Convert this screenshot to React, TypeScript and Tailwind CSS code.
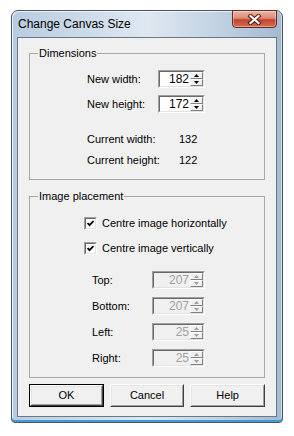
import React from "react";

const font = { fontFamily: '"Liberation Sans", Arial, sans-serif' };

function SpinBtn({ up, disabled }: { up?: boolean; disabled?: boolean }) {
  const c = disabled ? "#a0a0a0" : "#000000";
  return (
    <div className="flex-1 flex items-center justify-center bg-[#f0f0f0] border border-t-white border-l-white border-b-[#808080] border-r-[#808080]">
      <svg width="5" height="3" viewBox="0 0 5 3">
        {up ? <path d="M2.5 0 L5 3 L0 3 Z" fill={c} /> : <path d="M0 0 L5 0 L2.5 3 Z" fill={c} />}
      </svg>
    </div>
  );
}

function SpinBox({ value, w, disabled }: { value: string; w: string; disabled?: boolean }) {
  return (
    <div className={`flex h-[18px] ${w} border border-t-[#a0a0a0] border-l-[#a0a0a0] border-b-white border-r-white`}>
      <div className="flex flex-1 border border-t-[#696969] border-l-[#696969] border-b-[#e3e3e3] border-r-[#e3e3e3]">
        <div
          className={`flex-1 flex items-center justify-end pr-[1px] text-[12px] leading-none ${
            disabled ? "bg-[#f0f0f0] text-[#a0a0a0]" : "bg-white text-black"
          }`}
        >
          {value}
        </div>
        <div className="flex flex-col w-[13px]">
          <SpinBtn up disabled={disabled} />
          <SpinBtn disabled={disabled} />
        </div>
      </div>
    </div>
  );
}

function CheckBox() {
  return (
    <div className="w-[13px] h-[13px] border border-t-[#a0a0a0] border-l-[#a0a0a0] border-b-white border-r-white">
      <div className="w-full h-full bg-white border border-t-[#696969] border-l-[#696969] border-b-[#e3e3e3] border-r-[#e3e3e3] flex items-center justify-center">
        <svg width="7" height="7" viewBox="0 0 7 7">
          <path d="M0.5 3 L2.5 5.2 L6.5 1" stroke="#000" strokeWidth="1.8" fill="none" />
        </svg>
      </div>
    </div>
  );
}

function Button({ label, def }: { label: string; def?: boolean }) {
  return (
    <div className={`w-[75px] h-[23px] ${def ? "border border-[#000]" : ""}`}>
      <div className="w-full h-full border border-t-white border-l-white border-b-[#404040] border-r-[#404040]">
        <div className="w-full h-full border border-t-[#e3e3e3] border-l-[#e3e3e3] border-b-[#a0a0a0] border-r-[#a0a0a0] bg-[#f0f0f0] flex items-center justify-center text-[11px] text-black">
          {label}
        </div>
      </div>
    </div>
  );
}

export default function App() {
  return (
    <div className="w-[294px] h-[436px] bg-white pt-[10px] pl-[11px]" style={font}>
      <div className="w-[272px] h-[413px] flex flex-col rounded-t-[7px] rounded-b-[4px] border border-[#4b5663] bg-[linear-gradient(90deg,#b8cce0_0%,#cfdcea_30%,#dfe8f1_50%,#c3d3e3_75%,#a3bad1_100%)] shadow-[inset_0_-2px_0_#3f9bd8,inset_1px_1px_0_rgba(255,255,255,0.7),inset_-1px_0_0_rgba(255,255,255,0.5)]">
        <div className="h-[26px] flex items-center justify-between">
          <span className="ml-[6px] text-[12px] text-black">Change Canvas Size</span>
          <div className="self-start -mt-[1px] mr-[5px] w-[45px] h-[18px] rounded-b-[4px] border border-[#6b2a1f] bg-[linear-gradient(180deg,#ecb6a7_0%,#dd8b77_45%,#c4422d_55%,#d36f58_100%)] shadow-[inset_0_0_0_1px_rgba(255,255,255,0.35)] flex items-center justify-center">
            <svg width="15" height="11" viewBox="0 0 15 11">
              <path d="M3.5 2 L11.5 9 M11.5 2 L3.5 9" stroke="#4a1c14" strokeWidth="4.2" strokeLinecap="square" />
              <path d="M3.5 2 L11.5 9 M11.5 2 L3.5 9" stroke="#ffffff" strokeWidth="2.2" strokeLinecap="square" />
            </svg>
          </div>
        </div>
        <div className="mx-[5px] mb-[5px] flex-1 border border-[#687887] bg-[#f0f0f0] px-[11px] flex flex-col text-[11px] text-black">
          <fieldset className="mt-[9px] h-[133px] border border-[#a7a7a7]">
            <legend className="ml-[8px] px-[1px] leading-[13px]">Dimensions</legend>
            <div className="pl-[57px] flex flex-col">
              <div className="mt-[10px] flex items-center h-[18px]">
                <span className="w-[71px]">New width:</span>
                <SpinBox value="182" w="w-[47px]" />
              </div>
              <div className="mt-[7px] flex items-center h-[18px]">
                <span className="w-[71px]">New height:</span>
                <SpinBox value="172" w="w-[47px]" />
              </div>
              <div className="mt-[20px] flex items-center h-[13px]">
                <span className="w-[92px]">Current width:</span>
                <span>132</span>
              </div>
              <div className="mt-[8px] flex items-center h-[13px]">
                <span className="w-[92px]">Current height:</span>
                <span>122</span>
              </div>
            </div>
          </fieldset>
          <fieldset className="mt-[10px] h-[188px] border border-[#a7a7a7]">
            <legend className="ml-[8px] px-[1px] leading-[13px]">Image placement</legend>
            <div className="pl-[54px] flex flex-col">
              <div className="mt-[14px] flex items-center h-[13px] gap-[5px]">
                <CheckBox />
                <span>Centre image horizontally</span>
              </div>
              <div className="mt-[12px] flex items-center h-[13px] gap-[5px]">
                <CheckBox />
                <span>Centre image vertically</span>
              </div>
            </div>
            <div className="pl-[62px] flex flex-col">
              <div className="mt-[16px] flex items-center h-[18px]">
                <span className="w-[60px]">Top:</span>
                <SpinBox value="207" w="w-[53px]" disabled />
              </div>
              <div className="mt-[8px] flex items-center h-[18px]">
                <span className="w-[60px]">Bottom:</span>
                <SpinBox value="207" w="w-[53px]" disabled />
              </div>
              <div className="mt-[8px] flex items-center h-[18px]">
                <span className="w-[60px]">Left:</span>
                <SpinBox value="25" w="w-[53px]" disabled />
              </div>
              <div className="mt-[8px] flex items-center h-[18px]">
                <span className="w-[60px]">Right:</span>
                <SpinBox value="25" w="w-[53px]" disabled />
              </div>
            </div>
          </fieldset>
          <div className="mt-[6px] flex gap-[6px]">
            <Button label="OK" def />
            <Button label="Cancel" />
            <Button label="Help" />
          </div>
        </div>
      </div>
    </div>
  );
}
